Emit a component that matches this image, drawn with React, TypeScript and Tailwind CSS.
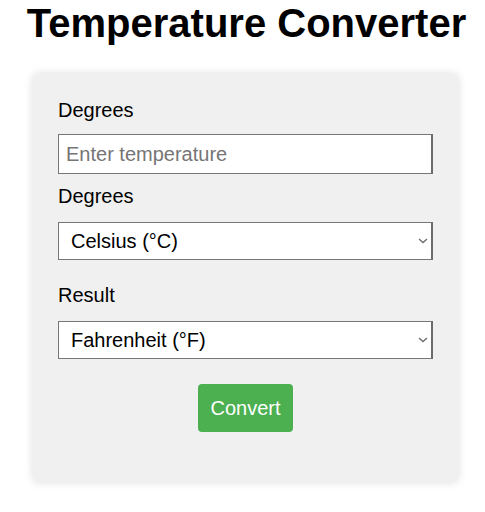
import React from "react";

function Chevron() {
  return (
    <svg
      className="pointer-events-none absolute right-[5px] top-1/2 -translate-y-1/2"
      width="10"
      height="6"
      viewBox="0 0 10 6"
      fill="none"
    >
      <path d="M1 1L5 4.5L9 1" stroke="#6f6f6f" strokeWidth="1.4" />
    </svg>
  );
}

function Select({ value }: { value: string }) {
  return (
    <div className="relative mt-[14px] w-[375px]">
      <select
        defaultValue={value}
        className="box-border block h-[38px] w-[375px] appearance-none border border-r-2 border-[#767676] border-r-[#6b6b6b] bg-white pl-[12px] text-[20px] text-black outline-none"
      >
        <option value="c">Celsius (°C)</option>
        <option value="f">Fahrenheit (°F)</option>
        <option value="k">Kelvin (K)</option>
      </select>
      <Chevron />
    </div>
  );
}

export default function App() {
  const font = { fontFamily: '"Liberation Sans", Arial, sans-serif' };
  return (
    <div className="min-h-[512px] w-[485px] bg-white text-black" style={font}>
      <h1 className="pl-[8px] text-center text-[40px] font-bold leading-[46px] m-0">
        Temperature Converter
      </h1>
      <div className="ml-[33px] mt-[28px] w-[425px] rounded-[5px] bg-[#f0f0f0] px-[25px] pt-[25px] pb-[50px] shadow-[0_0_10px_rgba(0,0,0,0.14)]">
        <label className="block text-[20px] leading-[23px]">Degrees</label>
        <input
          type="text"
          placeholder="Enter temperature"
          className="mt-[12px] box-border block h-[40px] w-[375px] border border-r-2 border-[#767676] border-r-[#6b6b6b] bg-white px-[7px] text-[20px] text-black placeholder:text-[#757575] outline-none"
        />
        <label className="mt-[11px] block text-[20px] leading-[23px]">Degrees</label>
        <Select value="c" />
        <label className="mt-[24px] block text-[20px] leading-[23px]">Result</label>
        <Select value="f" />
        <div className="mt-[25px] flex justify-center">
          <button className="h-[48px] w-[95px] rounded-[4px] bg-[#4caf50] text-[20px] leading-[23px] text-white">
            Convert
          </button>
        </div>
      </div>
    </div>
  );
}
